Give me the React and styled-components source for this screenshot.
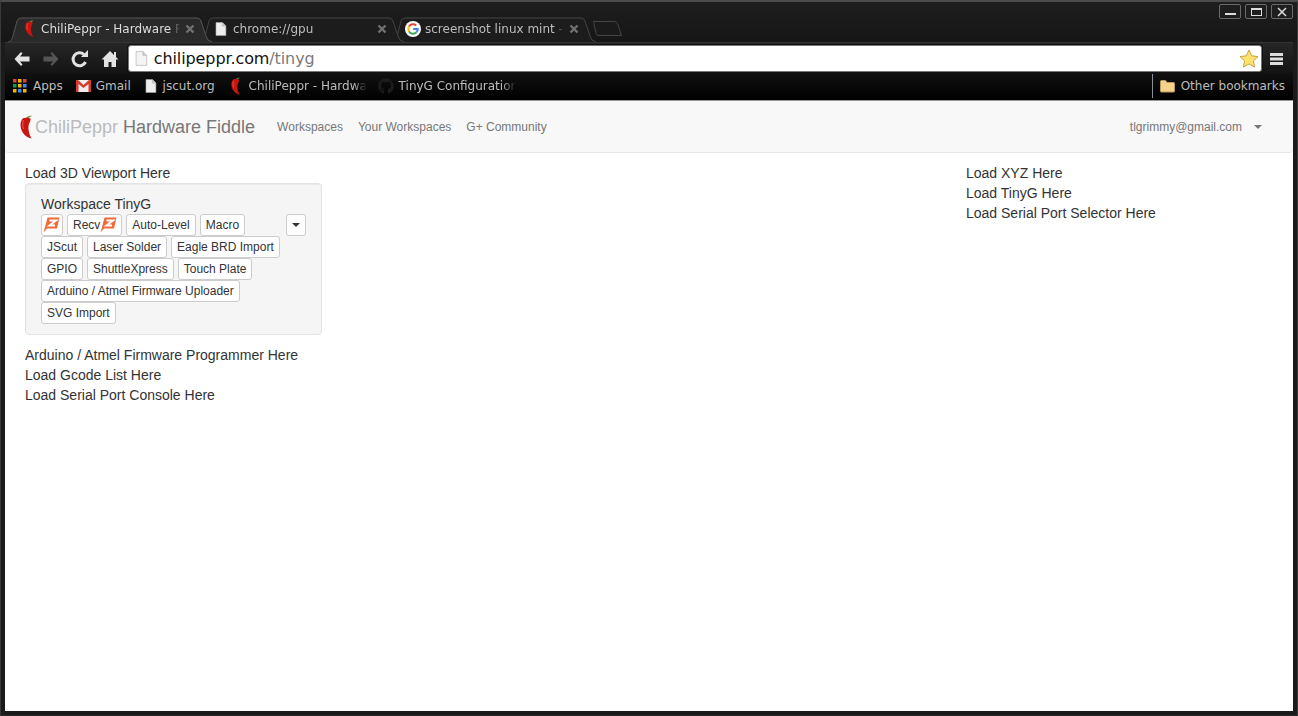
import React from 'react';
import styled, { createGlobalStyle } from 'styled-components';
import { FaGithub } from 'react-icons/fa';

const Global = createGlobalStyle`
  html, body { margin: 0; padding: 0; height: 100%; overflow: hidden; background: #1a1a1a; }
  #root { height: 716px; }
`;

const Win = styled.div`
  width: 1298px; height: 716px; box-sizing: border-box; display: flex; flex-direction: column;
  background: #1b1b1b; border: 1px solid #3a3a3a; border-top: 2px solid #4c4c4c; border-bottom: 1px solid #2a2a2a;
  font-family: "DejaVu Sans", sans-serif; position: relative;
`;
const TitleBar = styled.div`
  height: 40px; flex: none; display: flex; align-items: flex-end; padding-left: 7px;
  background: linear-gradient(#1e1e1e, #161616);
`;
const TabStrip = styled.div`display: flex; align-items: flex-end; flex: 1;`;
const TabShell = styled.div`
  position: relative; width: 204px; height: 25px; margin-right: -12px; flex: none;
  color: ${p => (p.$active ? '#dcdcdc' : '#bdbdbd')}; z-index: ${p => p.$z};
`;
const TabShape = styled.svg`position: absolute; inset: 0; width: 100%; height: 100%;`;
const TabBody = styled.div`
  position: absolute; inset: 0; padding: 0 17px 2px 13px; display: flex; align-items: center; font-size: 12px;
`;
const FavSlot = styled.span`width: 16px; margin-right: 4px; flex: none; display: flex; justify-content: center;`;
const TabLabel = styled.span`
  flex: 1; overflow: hidden; white-space: nowrap; min-width: 0;
  -webkit-mask-image: linear-gradient(to left, transparent 0, #000 10px);
  mask-image: linear-gradient(to left, transparent 0, #000 10px);
`;
const TabClose = styled.svg`width: 10px; height: 10px; margin-left: 5px; flex: none;`;
const NewTab = styled.svg`width: 29px; height: 15px; margin: 0 0 6px 9px; flex: none;`;
const WinButtons = styled.div`position: absolute; top: 2px; right: 4px; display: flex; gap: 4px;`;
const WinBtn = styled.div`
  box-sizing: border-box; width: 22px; height: 15px; border: 1px solid #6a6a6a; border-radius: 2px; background: #1e1e1e;
  display: flex; align-items: center; justify-content: center;
`;
const Toolbar = styled.div`
  height: 31px; flex: none; display: flex; align-items: center; padding: 1px 9px 0 7px; margin: 0 4px;
  background: linear-gradient(#262626, #141414); border-top: 1px solid #333;
  box-sizing: border-box;
`;
const NavIcon = styled.svg`width: 20px; height: 20px; flex: none; margin-right: 9px;`;
const Omni = styled.div`
  flex: 1; height: 27px; box-sizing: border-box; background: #fff; border: 1px solid #777; border-radius: 3px;
  box-shadow: 0 0 0 1px #111; display: flex; align-items: center; padding: 0 2px 0 6px; gap: 6px; margin-right: 7px;
`;
const Url = styled.div`flex: 1; font-size: 16px; color: #111; letter-spacing: -0.1px;`;
const UrlPath = styled.span`color: #7a7a7a;`;
const Bookmarks = styled.div`
  height: 27px; flex: none; display: flex; align-items: center; padding: 0 8px 2px 8px; font-size: 12px; color: #bcbcbc;
  background: linear-gradient(#111, #000); margin: 0 4px; box-sizing: border-box;
`;
const Mark = styled.div`
  display: flex; align-items: center; gap: ${p => p.$gap || 5}px; white-space: nowrap; margin-right: ${p => p.$mr || 0}px; flex: none;
  width: ${p => (p.$w ? p.$w + 'px' : 'auto')}; overflow: hidden;
  ${p => p.$fade ? '-webkit-mask-image: linear-gradient(to left, transparent 0, #000 14px); mask-image: linear-gradient(to left, transparent 0, #000 14px);' : ''}
`;
const Spacer = styled.div`flex: 1;`;
const Divider = styled.div`width: 1px; height: 24px; background: #8a9099; margin-right: 7px;`;
const Page = styled.div`
  flex: 1; margin: 0 4px 4px; background: #fff; border-top: 1px solid #999;
  font-family: "Liberation Sans", Arial, sans-serif; font-size: 14px; color: #333; line-height: 20px; min-height: 0;
`;
const Navbar = styled.div`
  height: 52px; box-sizing: border-box; background: #f8f8f8; border-bottom: 1px solid #e7e7e7; border-radius: 4px;
  display: flex; align-items: center; padding: 0 31px 0 15px; color: #777;
`;
const Brand = styled.div`display: flex; align-items: center; font-size: 18px; margin-right: 22px; white-space: nowrap;`;
const BrandPale = styled.span`color: #bbb; margin-right: 5px; margin-left: 3px;`;
const NavLink = styled.div`font-size: 12px; margin-right: 15px; white-space: nowrap;`;
const Caret = styled.span`
  display: inline-block; width: 0; height: 0; border-top: 4px solid ${p => p.$c || '#777'};
  border-left: 4px solid transparent; border-right: 4px solid transparent;
`;
const User = styled.div`font-size: 12px; margin-right: 12px;`;
const Content = styled.div`display: flex; padding: 10px 20px 0;`;
const LeftCol = styled.div`width: 297px; flex: none;`;
const RightCol = styled.div`margin-left: 644px;`;
const Well = styled.div`
  box-sizing: border-box; height: 152px; margin: 0 0 10px; padding: 10px 15px; background: #f5f5f5;
  border: 1px solid #e3e3e3; border-radius: 4px; box-shadow: inset 0 1px 1px rgba(0,0,0,.05); position: relative;
`;
const Btn = styled.div`
  box-sizing: border-box; display: inline-flex; align-items: center; height: 22px; padding: 0 5px;
  font-size: 12px; line-height: 18px; color: #333; background: #fff; border: 1px solid #ccc; border-radius: 3px; white-space: nowrap;
`;
const IconBtn = styled(Btn)`padding: 0 2px 0 1px;`;
const LabelIconBtn = styled(Btn)`padding: 0 4px 0 5px;`;
const BtnRow = styled.div`display: flex; gap: 4px; height: 22px;`;
const DropBtn = styled(Btn)`
  position: absolute; top: 30px; left: 260px; width: 20px; justify-content: center; padding: 0;
`;

const Chili = ({ h = 18 }) => (
  <svg width={h / 2} height={h} viewBox="0 0 12 24" style={{ flex: 'none' }}>
    <path d="M6 3 C7 1.500 9 1 11 .5 L11.500 1.200 C10 1.800 9 2.500 8.500 3.500z" fill="#6c8a2a" />
    <path d="M3 3.200 C5 2.400 8.500 2.400 10.500 3.500 C11 5.500 9.500 7.500 8.800 9.500 C8 13 8.500 18 11.500 23.500 C6.500 23 2 18 .8 13 C0 9 .8 5 3 3.200z" fill="#c9150f" />
    <path d="M3.500 5 C2.500 7.500 2.500 11 3.500 14" stroke="#ec5a4e" strokeWidth="1" fill="none" />
  </svg>
);
const FileIcon = ({ size = 14, c = '#eee' }) => (
  <svg width={size * 0.85} height={size} viewBox="0 0 12 14" style={{ flex: 'none' }}>
    <path d="M1 .5h6.500L11 4v9.500H1z" fill={c} stroke="#aaa" strokeWidth=".6" />
    <path d="M7.500.5V4H11" fill="#ccc" stroke="#aaa" strokeWidth=".6" />
  </svg>
);
const GIcon = () => (
  <svg width="16" height="16" viewBox="0 0 16 16" style={{ flex: 'none' }}>
    <circle cx="8" cy="8" r="8" fill="#fff" />
    <path d="M11.200 4.400A4.800 4.800 0 0 0 4 5.500" stroke="#ea4335" strokeWidth="2" fill="none" />
    <path d="M4 5.500A4.800 4.800 0 0 0 4 10.500" stroke="#fbbc05" strokeWidth="2" fill="none" />
    <path d="M4 10.500A4.800 4.800 0 0 0 11.200 11.600" stroke="#34a853" strokeWidth="2" fill="none" />
    <path d="M11.200 11.600A4.800 4.800 0 0 0 12.800 8H8.200" stroke="#4285f4" strokeWidth="2" fill="none" />
  </svg>
);
const Zee = () => (
  <svg width="17" height="16" viewBox="0 0 17 16" style={{ flex: 'none' }}>
    <path d="M4.500 .5H16.500L14 11.500 H4 L.5 15.500 1.800 11z" fill="#ef6a37" />
    <path d="M6.500 3.500H13L6.500 8.500H12" stroke="#fff" strokeWidth="2" fill="none" />
  </svg>
);

const tabs = [
  { label: 'ChiliPeppr - Hardware Fiddle', icon: <Chili h={17} />, active: true },
  { label: 'chrome://gpu', icon: <FileIcon size={14} /> },
  { label: 'screenshot linux mint - Google', icon: <GIcon /> },
];

const TAB_D = 'M0 25 C3 25 4 22 5 19 L9 4 Q10 1 13 1 H189 Q192 1 193 4 L198 19 Q199 24 204 25';

function Tab({ label, icon, active, z }) {
  return (
    <TabShell $z={z} $active={active}>
      <TabShape viewBox="0 0 204 25">
        <path d={TAB_D} fill={active ? '#2a2a2a' : '#1c1c1c'} stroke={active ? '#555' : '#444'} />
      </TabShape>
      <TabBody>
        <FavSlot>{icon}</FavSlot>
        <TabLabel>{label}</TabLabel>
        <TabClose viewBox="0 0 10 10"><path d="M1.500 1.500l7 7M8.500 1.500l-7 7" stroke="#707070" strokeWidth="2.400" /></TabClose>
      </TabBody>
    </TabShell>
  );
}

export default function App() {
  return (
    <Win>
      <Global />
      <TitleBar>
        <TabStrip>
          {tabs.map((t, i) => <Tab key={t.label} z={t.active ? 9 : 3 - i} {...t} />)}
          <NewTab viewBox="0 0 29 15"><path d="M.5.5h21q2 0 3 2l4 12H5q-1 0-2-2z" fill="#1a1a1a" stroke="#444" /></NewTab>
        </TabStrip>
        <WinButtons>
          <WinBtn><svg width="13" height="9"><rect x="1" y="6" width="11" height="2" fill="#ddd" /></svg></WinBtn>
          <WinBtn><svg width="13" height="10"><rect x="1.500" y="1.500" width="10" height="7" fill="none" stroke="#ddd" /><rect x="1" y="1" width="11" height="2" fill="#ddd" /></svg></WinBtn>
          <WinBtn><svg width="12" height="10"><path d="M2 1l8 8M10 1l-8 8" stroke="#ddd" strokeWidth="1.500" /></svg></WinBtn>
        </WinButtons>
      </TitleBar>
      <Toolbar>
        <NavIcon viewBox="0 0 20 20"><path d="M9 3 2.500 10 9 17l1.500-1.500L8 12.500h9.500v-5H8l2.500-3z" fill="#e2e2e2" /></NavIcon>
        <NavIcon viewBox="0 0 20 20"><path d="M11 3l6.500 7-6.500 7-1.500-1.500 2.500-3H2.500v-5H12l-2.500-3z" fill="#555" /></NavIcon>
        <NavIcon viewBox="0 0 20 20"><path d="M15.500 13A6.500 6.500 0 1 1 14 5.500" fill="none" stroke="#e2e2e2" strokeWidth="3" /><path d="M11 8h7V1z" fill="#e2e2e2" /></NavIcon>
        <NavIcon viewBox="-1 0 20 20"><path d="M10 2 1.500 10.500H4V18h4.500v-5h3v5H16v-7.500h2.500L16 8V3h-2v3z" fill="#e2e2e2" /></NavIcon>
        <Omni>
          <FileIcon size={15} c="#f4f4f4" />
          <Url>chilipeppr.com<UrlPath>/tinyg</UrlPath></Url>
          <svg width="20" height="19" viewBox="0 0 20 19"><path d="M10 1l2.700 5.800 6.300.8-4.600 4.300 1.200 6.200L10 15l-5.600 3.100 1.200-6.200L1 7.600l6.300-.8z" fill="#fce36f" stroke="#c9a24a" /></svg>
        </Omni>
        <svg width="15" height="14" viewBox="0 0 15 14"><path d="M1 1h13v3H1zM1 5.500h13v3H1zM1 10h13v3H1z" fill="#ddd" /></svg>
      </Toolbar>
      <Bookmarks>
        <Mark $mr={13} $gap={6}>
          <svg width="14" height="14" viewBox="0 0 14 14">
            {[0, 5, 10].flatMap(y => [0, 5, 10].map(x => (
              <rect key={`${x}${y}`} x={x} y={y} width="3.500" height="3.500" fill={y === 0 ? (x === 5 ? '#f4b400' : '#db4437') : y === 5 ? (x === 5 ? '#f4b400' : x === 0 ? '#0f9d58' : '#4285f4') : (x === 5 ? '#4285f4' : '#f4b400')} />
            )))}
          </svg>
          Apps
        </Mark>
        <Mark $mr={14}>
          <svg width="15" height="12" viewBox="0 0 15 12"><rect width="15" height="12" fill="#eee" /><path d="M0 0h2l5.500 5L13 0h2v12h-2.500V4L7.500 8 2.500 4v8H0z" fill="#d63a2c" /></svg>
          Gmail
        </Mark>
        <Mark $mr={16} $gap={6}><FileIcon size={14} />jscut.org</Mark>
        <Mark $mr={11} $w={136} $gap={9} $fade><Chili h={18} />ChiliPeppr - Hardware Fiddle</Mark>
        <Mark $w={138} $fade>
          <FaGithub size={16} color="#1c1c1c" style={{ flex: 'none' }} />
          TinyG Configuration
        </Mark>
        <Spacer />
        <Divider />
        <Mark $gap={6}>
          <svg width="15" height="14" viewBox="0 0 15 14"><path d="M.5 2.500q0-1 1-1h4l1.500 2h6.500q1 0 1 1v7.500q0 1-1 1h-12q-1 0-1-1z" fill="#f6d28a" stroke="#b99a5c" /></svg>
          Other bookmarks
        </Mark>
      </Bookmarks>
      <Page>
        <Navbar>
          <Brand><Chili h={24} /><BrandPale>ChiliPeppr</BrandPale>Hardware Fiddle</Brand>
          <NavLink>Workspaces</NavLink>
          <NavLink>Your Workspaces</NavLink>
          <NavLink>G+ Community</NavLink>
          <Spacer />
          <User>tlgrimmy@gmail.com</User>
          <Caret />
        </Navbar>
        <Content>
          <LeftCol>
            <div>Load 3D Viewport Here</div>
            <Well>
              <div>Workspace TinyG</div>
              <BtnRow><IconBtn><Zee /></IconBtn><LabelIconBtn>Recv<Zee /></LabelIconBtn><Btn>Auto-Level</Btn><Btn>Macro</Btn></BtnRow>
              <BtnRow><Btn>JScut</Btn><Btn>Laser Solder</Btn><Btn>Eagle BRD Import</Btn></BtnRow>
              <BtnRow><Btn>GPIO</Btn><Btn>ShuttleXpress</Btn><Btn>Touch Plate</Btn></BtnRow>
              <BtnRow><Btn>Arduino / Atmel Firmware Uploader</Btn></BtnRow>
              <BtnRow><Btn>SVG Import</Btn></BtnRow>
              <DropBtn><Caret $c="#333" /></DropBtn>
            </Well>
            <div>Arduino / Atmel Firmware Programmer Here</div>
            <div>Load Gcode List Here</div>
            <div>Load Serial Port Console Here</div>
          </LeftCol>
          <RightCol>
            <div>Load XYZ Here</div>
            <div>Load TinyG Here</div>
            <div>Load Serial Port Selector Here</div>
          </RightCol>
        </Content>
      </Page>
    </Win>
  );
}
